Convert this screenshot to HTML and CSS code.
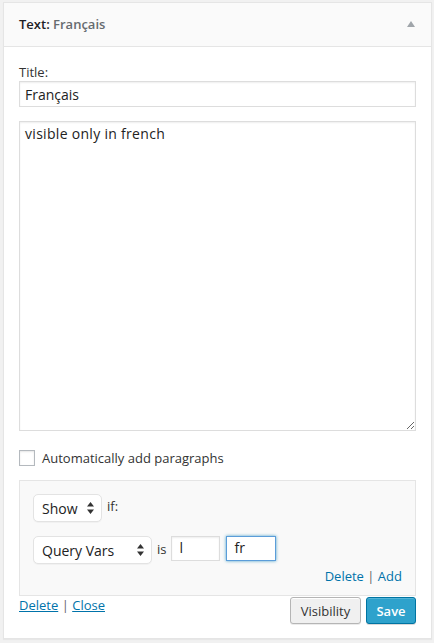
FILE: index.html
```html
<!DOCTYPE html>
<html>
<head>
<meta charset="utf-8">
<link rel="stylesheet" href="styles.css">
</head>
<body>
<div class="widget">
  <div class="widget-top">
    <h4 class="widget-title">Text: <span class="in-title">Français</span></h4>
    <svg class="toggle" width="8" height="6" viewBox="0 0 8 6"><path d="M4 0 L8 6 L0 6 Z" fill="#a0a5aa"/></svg>
  </div>
  <div class="widget-inside">
    <label class="field-label" for="t">Title:</label>
    <input id="t" class="text-input" type="text" value="Français">
    <textarea class="text-area">visible only in french</textarea>
    <div class="check-row">
      <span class="checkbox"></span>
      <span class="check-label">Automatically add paragraphs</span>
    </div>
    <div class="conditions">
      <div class="cond-row">
        <span class="select select-show">Show
          <svg class="arrows" width="7" height="12" viewBox="0 0 7 12"><path d="M3.5 0 L7 4.5 L0 4.5 Z M0 7.5 L7 7.5 L3.5 12 Z" fill="#333"/></svg>
        </span>
        <span class="word">if:</span>
      </div>
      <div class="cond-row row2">
        <span class="select select-query">Query Vars
          <svg class="arrows" width="7" height="12" viewBox="0 0 7 12"><path d="M3.5 0 L7 4.5 L0 4.5 Z M0 7.5 L7 7.5 L3.5 12 Z" fill="#333"/></svg>
        </span>
        <span class="word is">is</span>
        <span class="small-input">l</span>
        <span class="small-input focused">fr</span>
      </div>
      <div class="cond-links"><a class="link">Delete</a> <span class="sep">|</span> <a class="link">Add</a></div>
    </div>
    <div class="control">
      <div class="control-links"><a class="link u">Delete</a> <span class="sep">|</span> <a class="link u">Close</a></div>
      <div class="buttons">
        <span class="btn btn-secondary">Visibility</span>
        <span class="btn btn-primary">Save</span>
      </div>
    </div>
  </div>
</div>
</body>
</html>
```
FILE: styles.css
```css
html, body {
  margin: 0;
  padding: 0;
}
body {
  background: #f1f1f1;
  font-family: "Open Sans", "Liberation Sans", sans-serif;
  font-size: 13px;
  color: #333;
  height: 643px;
  overflow: hidden;
}
.widget {
  margin: 2px 0 0 3px;
  width: 429px;
  box-sizing: border-box;
  border: 1px solid #e5e5e5;
  background: #fff;
  box-shadow: 0 1px 1px rgba(0,0,0,.04);
}
.widget-top {
  height: 43px;
  background: #fafafa;
  border-bottom: 1px solid #e5e5e5;
  display: flex;
  align-items: center;
  justify-content: space-between;
  padding: 0 16px 0 15px;
}
.widget-title {
  margin: 0;
  font-size: 13px;
  font-weight: 600;
  color: #1d2125;
  line-height: 1;
}
.in-title {
  color: #666b70;
}
.toggle {
  display: block;
  margin-top: -1px;
}
.widget-inside {
  padding: 16px 15px 14px 15px;
  display: flex;
  flex-direction: column;
}
.field-label {
  display: block;
  line-height: 18px;
  color: #333;
}
.text-input {
  display: block;
  box-sizing: border-box;
  width: 397px;
  height: 26px;
  margin: 0;
  border: 1px solid #ddd;
  box-shadow: inset 0 1px 2px rgba(0,0,0,.07);
  padding: 0 5px;
  font-family: inherit;
  font-size: 14px;
  color: #222;
  outline: none;
}
.text-area {
  display: block;
  box-sizing: border-box;
  width: 397px;
  height: 310px;
  margin: 14px 0 0 0;
  border: 1px solid #ddd;
  box-shadow: inset 0 1px 2px rgba(0,0,0,.07);
  padding: 2px 5px;
  font-family: inherit;
  font-size: 14px;
  letter-spacing: 0.3px;
  line-height: 20px;
  color: #222;
  resize: vertical;
  outline: none;
}
.check-row {
  display: flex;
  align-items: center;
  margin-top: 19px;
  height: 16px;
}
.checkbox {
  width: 16px;
  height: 16px;
  box-sizing: border-box;
  border: 1px solid #b4b9be;
  background: #fff;
  box-shadow: inset 0 1px 2px rgba(0,0,0,.1);
}
.check-label {
  margin-left: 7px;
  color: #333;
}
.conditions {
  margin-top: 14px;
  width: 397px;
  box-sizing: border-box;
  background: #f9f9f9;
  border: 1px solid #e5e5e5;
  padding: 13px 13px 10px 13px;
}
.cond-row {
  display: flex;
  align-items: flex-start;
}
.row2 {
  margin-top: 14px;
}
.select {
  box-sizing: border-box;
  height: 28px;
  display: flex;
  align-items: center;
  justify-content: space-between;
  background: #fff;
  border: 1px solid #e3e3e3;
  border-radius: 5px;
  padding: 0 7px 0 8px;
  font-size: 14px;
  color: #222;
  box-shadow: 0 1px 0 rgba(0,0,0,.03);
}
.select-show {
  width: 69px;
}
.select-query {
  width: 119px;
}
.arrows {
  display: block;
}
.word {
  margin-left: 5px;
  line-height: 24px;
  color: #333;
}
.word.is {
  margin-left: 5px;
  margin-right: 5px;
  line-height: 26px;
}
.small-input {
  box-sizing: border-box;
  width: 49px;
  height: 25px;
  border: 1px solid #ddd;
  background: #fff;
  padding: 0 7px;
  font-size: 14px;
  line-height: 22px;
  color: #222;
  box-shadow: inset 0 1px 2px rgba(0,0,0,.07);
}
.small-input.focused {
  width: 50px;
  margin-left: 6px;
  border-color: #5b9dd9;
  box-shadow: 0 0 3px rgba(30,140,190,.8);
}
.cond-links {
  text-align: right;
  margin-top: 3px;
  line-height: 18px;
}
.link {
  color: #0073aa;
  text-decoration: none;
}
.link.u {
  text-decoration: underline;
}
.sep {
  color: #666;
}
.control {
  display: flex;
  justify-content: space-between;
  align-items: flex-start;
  width: 397px;
}
.control-links {
  line-height: 18px;
}
.buttons {
  display: flex;
  gap: 5px;
  margin-top: 1px;
}
.btn {
  box-sizing: border-box;
  height: 27px;
  display: flex;
  align-items: center;
  justify-content: center;
  border-radius: 3px;
  font-size: 13px;
}
.btn-secondary {
  width: 71px;
  background: #f0f0f0;
  border: 1px solid #b5b5b5;
  color: #333;
  box-shadow: inset 0 1px 0 #fff, 0 1px 0 rgba(0,0,0,.08);
}
.btn-primary {
  width: 50px;
  background: #2ea2cc;
  border: 1px solid #0074a2;
  color: #fff;
  font-weight: 600;
  box-shadow: inset 0 1px 0 rgba(120,200,230,.5), 0 1px 0 rgba(0,0,0,.15);
}
```
